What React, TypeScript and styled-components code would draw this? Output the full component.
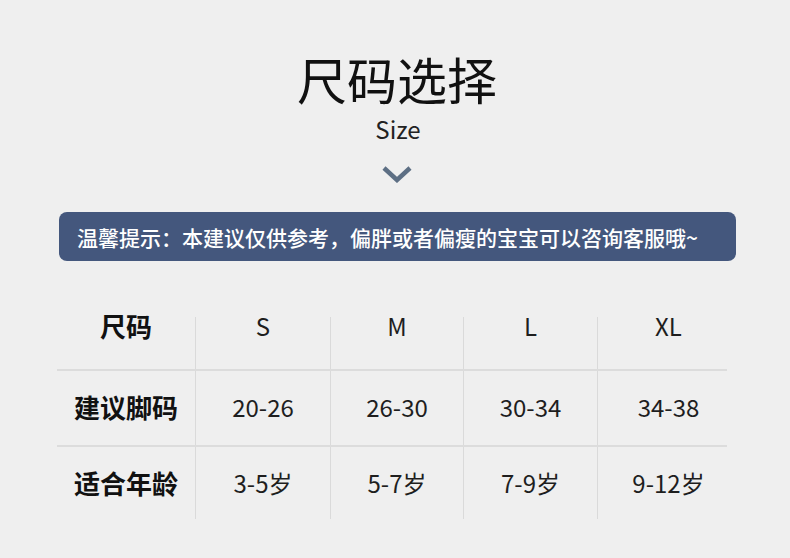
import React from 'react';
import styled, { createGlobalStyle } from 'styled-components';

const GlobalStyle = createGlobalStyle`
  html, body {
    margin: 0;
    padding: 0;
    background: #efefef;
  }
  body {
    font-family: "Noto Sans CJK SC", "Noto Sans", sans-serif;
  }
`;

const Page = styled.div`
  width: 790px;
  height: 558px;
  overflow: hidden;
  display: flex;
  flex-direction: column;
  align-items: center;
`;

const Title = styled.h1`
  margin: 51px 0 0 4px;
  font-size: 50px;
  line-height: 54px;
  font-weight: 400;
  color: #111;
`;

const Subtitle = styled.div`
  margin-top: 10px;
  margin-left: 6px;
  font-size: 24px;
  line-height: 28px;
  color: #222;
`;

const Chevron = styled.svg`
  margin-top: 23px;
  margin-left: 4px;
  display: block;
`;

const Banner = styled.div`
  margin-top: 29px;
  align-self: flex-start;
  margin-left: 59px;
  width: 677px;
  height: 49px;
  box-sizing: border-box;
  padding-left: 18px;
  display: flex;
  align-items: center;
  background: #44577d;
  border-radius: 8px;
  color: #fff;
  font-size: 21px;
  font-weight: 500;
`;

const Table = styled.div`
  margin-top: 56px;
  align-self: flex-start;
  margin-left: 57px;
  width: 670px;
`;

const Row = styled.div<{ $height: number; $top: number; $lh: number; $line?: boolean }>`
  display: grid;
  grid-template-columns: 138px 135px 133px 134px 130px;
  height: ${p => p.$height}px;
  border-bottom: ${p => (p.$line ? '2px solid #dcdcdc' : 'none')};
  box-sizing: border-box;

  & > div {
    padding-top: ${p => p.$top}px;
    line-height: ${p => p.$lh}px;
  }
`;

const Label = styled.div`
  text-align: center;
  font-size: 26px;
  font-weight: 700;
  color: #111;
`;

const Cell = styled.div<{ $shift?: number }>`
  text-align: center;
  font-size: 24px;
  color: #1e1e1e;
  border-left: 1px solid #dadada;
  padding-left: ${p => p.$shift || 0}px;
`;

const rows = [
  { label: '尺码', values: ['S', 'M', 'L', 'XL'], height: 54, top: 0, lh: 17, line: true },
  { label: '建议脚码', values: ['20-26', '26-30', '30-34', '34-38'], height: 76, top: 23, lh: 26, line: true },
  { label: '适合年龄', values: ['3-5岁', '5-7岁', '7-9岁', '9-12岁'], height: 72, top: 23, lh: 26, line: false },
];

function App() {
  return (
    <Page>
      <GlobalStyle />
      <Title>尺码选择</Title>
      <Subtitle>Size</Subtitle>
      <Chevron width="30" height="17" viewBox="0 0 30 17">
        <path d="M2 2 L15 14 L28 2" fill="none" stroke="#5d6f84" strokeWidth="4.5" strokeLinejoin="miter" />
      </Chevron>
      <Banner>温馨提示：本建议仅供参考，偏胖或者偏瘦的宝宝可以咨询客服哦~</Banner>
      <Table>
        {rows.map((row, index) => (
          <Row key={index} $height={row.height} $top={row.top} $lh={row.lh} $line={row.line}>
            <Label>{row.label}</Label>
            {row.values.map((value, i) => (
              <Cell key={i} $shift={i === 3 ? 12 : 0}>{value}</Cell>
            ))}
          </Row>
        ))}
      </Table>
    </Page>
  );
}

export default App;
